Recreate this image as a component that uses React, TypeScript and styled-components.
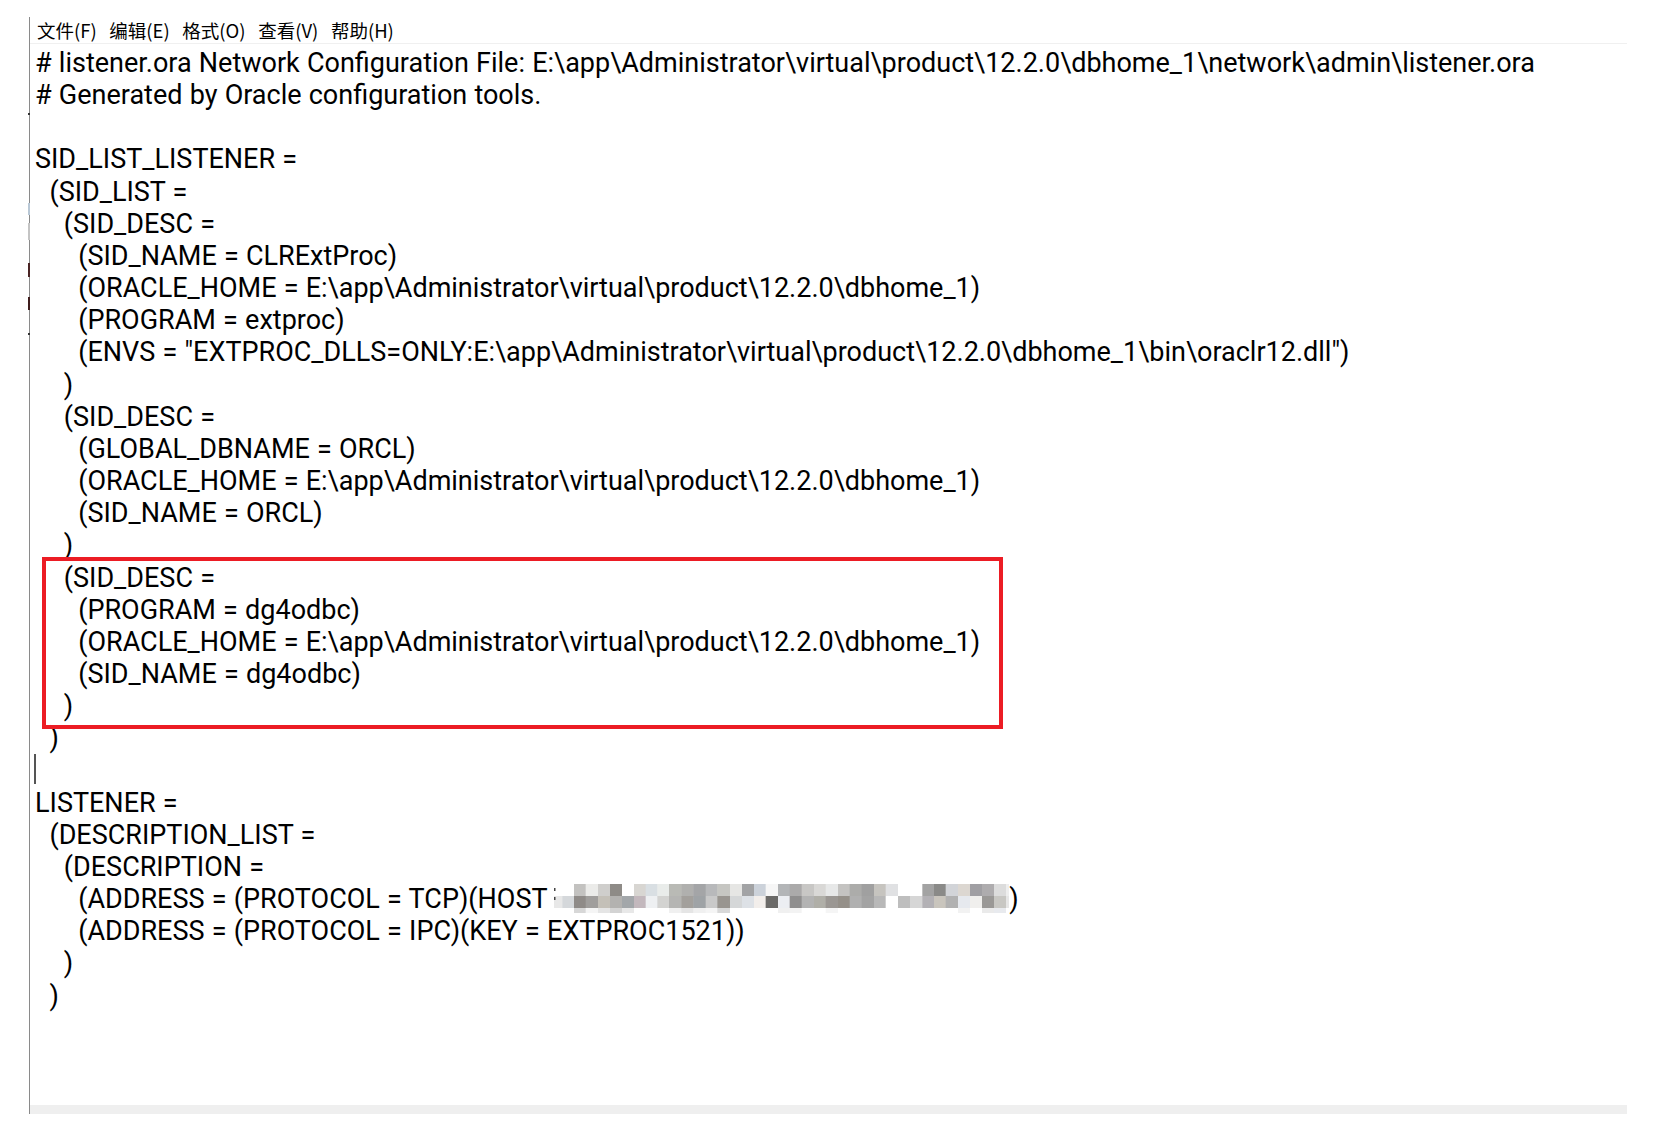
import React from "react";
import styled, { createGlobalStyle } from "styled-components";

const GlobalStyle = createGlobalStyle`
  html, body { margin: 0; padding: 0; background: #fff; }
  body { width: 1666px; height: 1133px; overflow: hidden; }
`;

const Page = styled.div`
  width: 1666px;
  height: 1133px;
  padding-top: 17px;
  box-sizing: border-box;
`;

const Window = styled.div`
  position: relative;
  margin-left: 29px;
  width: 1597px;
  height: 1097px;
  border-left: 1px solid #8a8a8a;
  display: flex;
  flex-direction: column;
`;

const EdgeMark = styled.span<{ $top: number; $h: number; $c: string }>`
  position: absolute;
  left: -2px;
  top: ${(p) => p.$top}px;
  width: 2px;
  height: ${(p) => p.$h}px;
  background: ${(p) => p.$c};
`;

const MenuBar = styled.div`
  height: 26px;
  display: flex;
  align-items: center;
  gap: 12.6px;
  padding-left: 7px;
  border-bottom: 1px solid #f0f0f0;
  font-family: "Noto Sans CJK SC", sans-serif;
  font-size: 18.5px;
  color: #000;
`;

const MenuItem = styled.span`
  white-space: nowrap;
`;

const Editor = styled.div`
  flex: 1;
  padding: 3px 0 0 5px;
  font-family: Roboto, "Noto Sans", sans-serif;
  font-size: 27px;
  word-spacing: 0.5px;
  line-height: 32.17px;
  color: #000;
  white-space: pre;
`;

const Line = styled.div`
  height: 32.17px;
`;

const Highlight = styled.div`
  position: relative;

  &::after {
    content: "";
    position: absolute;
    left: 7px;
    top: -5px;
    width: 961px;
    height: 172px;
    box-sizing: border-box;
    border: 4px solid #ec1c24;
    pointer-events: none;
  }
`;

const Caret = styled.span`
  display: inline-block;
  width: 1.5px;
  height: 30px;
  margin-left: -1px;
  vertical-align: top;
  background: #555;
`;

const MosaicBox = styled.svg`
  display: inline-block;
  vertical-align: top;
`;

const BottomBar = styled.div`
  height: 9px;
  background: #efefef;
`;

// column edges of the pixelation grid, in thirds of a pixel
const edges = [45, 70, 105, 140, 177, 213, 249, 285, 320, 355, 390, 427, 463, 500, 535, 573, 609, 645, 680, 717, 752, 788, 825, 860, 897, 932, 968, 1005, 1040, 1077, 1113, 1150, 1185, 1220, 1257, 1293, 1329, 1365, 1401, 1410];

const row1 = ["#fff", "#fff", "#c3c2c0", "#ebebe9", "#cfcecc", "#8e8b87", "#fff", "#d8d6d2", "#d9dfe3", "#e9ecea", "#b9bab5", "#b0b0ae", "#a4a5a7", "#b8b9bb", "#c6c6c2", "#e6e6e4", "#a2a3a5", "#ccd2da", "#f6f6f6", "#b3b5b7", "#abaaaa", "#c8c7c5", "#d9d8d6", "#e7e8e8", "#c4c3c1", "#acacaa", "#a0a0a0", "#c6c4bf", "#e0e1e3", "#fff", "#fff", "#a3a3a3", "#8a8a88", "#d2d4d8", "#dcd7d1", "#a09fa3", "#aeacae", "#dcdcdc", "#eeeeee"];
const row2 = ["#e8e8e8", "#d5d8db", "#8f8b88", "#a09e9c", "#c4c0b8", "#b3b2b0", "#a3a7aa", "#c3b8bd", "#eef0f2", "#d3d3d1", "#b5b5b3", "#a3a09c", "#9fa3a6", "#c9c9c9", "#999590", "#d5d7d8", "#dde1e6", "#f2eeeb", "#6b6a68", "#eceef2", "#8f8e8e", "#b3b3b3", "#b0afa8", "#9b9793", "#959089", "#b0b0b0", "#a3a3a3", "#b8b8b8", "#fff", "#bebebe", "#d6d6d6", "#b3b1b5", "#c9c5bd", "#b1b1b1", "#e6e9ee", "#f0efed", "#9a9896", "#c8c7c3", "#e6e6e6"];
const row3 = ["#fff", "#fff", "#d7d7d7", "#f5f5f5", "#e5e5e5", "#d3d3d3", "#e8e8e8", "#fff", "#fff", "#fff", "#f0f0f0", "#e5e5e5", "#f0f0f0", "#f5f5f5", "#d8d8d8", "#fff", "#fff", "#fff", "#fff", "#f0f0f0", "#f3f3f3", "#fff", "#fff", "#f5f5f5", "#fff", "#fff", "#fff", "#fff", "#fff", "#fff", "#fff", "#fff", "#fff", "#fff", "#f2f2f2", "#fff", "#eaeaea", "#e8eaee", "#fff"];

// pixelated (blurred) host address
const Mosaic = () => {
  const x = (i: number) => (edges[i] - 45) / 3;
  const w = x(edges.length - 1);
  return (
    <MosaicBox width={w} height={30} viewBox={`0 0 ${w} 30`}>
      {[row1, row2, row3].map((row, r) =>
        row.map((c, i) => (
          <rect key={`${r}-${i}`} x={x(i)} y={[1, 13, 25][r]} width={x(i + 1) - x(i) + 0.5} height={r === 2 ? 5 : 12.5} fill={c} />
        ))
      )}
      <rect x={-1} y={5} width={2.5} height={3} fill="#444" />
      <rect x={-1} y={14} width={2.5} height={3} fill="#444" />
    </MosaicBox>
  );
};

const menu = ["文件(F)", "编辑(E)", "格式(O)", "查看(V)", "帮助(H)"];

const marks = [
  { top: 96, h: 2, c: "#333" },
  { top: 186, h: 12, c: "#b9c8d6" },
  { top: 206, h: 17, c: "#c4c4c4" },
  { top: 246, h: 14, c: "#4a2424" },
  { top: 280, h: 13, c: "#3f1d1d" },
  { top: 316, h: 2, c: "#333" },
];

const HOME = "E:\\app\\Administrator\\virtual\\product\\12.2.0\\dbhome_1";

const before = [
  "# listener.ora Network Configuration File: " + HOME + "\\network\\admin\\listener.ora",
  "# Generated by Oracle configuration tools.",
  "",
  "SID_LIST_LISTENER =",
  "  (SID_LIST =",
  "    (SID_DESC =",
  "      (SID_NAME = CLRExtProc)",
  "      (ORACLE_HOME = " + HOME + ")",
  "      (PROGRAM = extproc)",
  '      (ENVS = "EXTPROC_DLLS=ONLY:' + HOME + '\\bin\\oraclr12.dll")',
  "    )",
  "    (SID_DESC =",
  "      (GLOBAL_DBNAME = ORCL)",
  "      (ORACLE_HOME = " + HOME + ")",
  "      (SID_NAME = ORCL)",
  "    )",
];

const boxed = [
  "    (SID_DESC =",
  "      (PROGRAM = dg4odbc)",
  "      (ORACLE_HOME = " + HOME + ")",
  "      (SID_NAME = dg4odbc)",
  "    )",
];

const after = [
  "LISTENER =",
  "  (DESCRIPTION_LIST =",
  "    (DESCRIPTION =",
];

const tail = [
  "      (ADDRESS = (PROTOCOL = IPC)(KEY = EXTPROC1521))",
  "    )",
  "  )",
];

export default function App() {
  return (
    <Page>
      <GlobalStyle />
      <Window>
        {marks.map((m) => (
          <EdgeMark key={m.top} $top={m.top} $h={m.h} $c={m.c} />
        ))}
        <MenuBar>
          {menu.map((m) => (
            <MenuItem key={m}>{m}</MenuItem>
          ))}
        </MenuBar>
        <Editor>
          {before.map((l, i) => (
            <Line key={`b${i}`}>{l}</Line>
          ))}
          <Highlight>
            {boxed.map((l, i) => (
              <Line key={`h${i}`}>{l}</Line>
            ))}
          </Highlight>
          <Line>  )</Line>
          <Line>
            <Caret />
          </Line>
          {after.map((l, i) => (
            <Line key={`a${i}`}>{l}</Line>
          ))}
          <Line>
            {"      (ADDRESS = (PROTOCOL = TCP)(HOST "}
            <Mosaic />)
          </Line>
          {tail.map((l, i) => (
            <Line key={`t${i}`}>{l}</Line>
          ))}
        </Editor>
        <BottomBar />
      </Window>
    </Page>
  );
}
